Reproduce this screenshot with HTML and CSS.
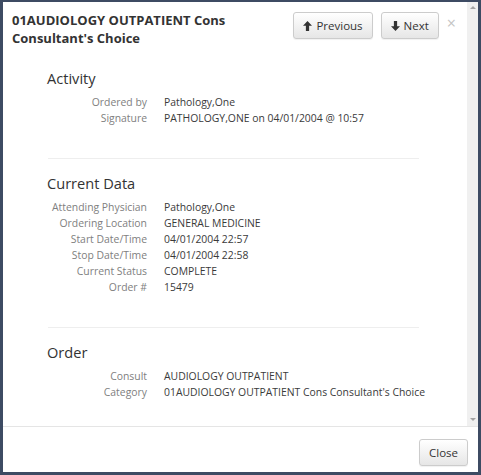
FILE: index.html
```html
<!DOCTYPE html>
<html>
<head>
<meta charset="utf-8">
<link rel="stylesheet" href="styles.css">
</head>
<body>
<div class="frame">
  <div class="scroller">
    <div class="content">
      <div class="header">
        <h4 class="title">01AUDIOLOGY OUTPATIENT Cons Consultant's Choice</h4>
        <div class="nav">
          <button class="btn"><svg class="ico" viewBox="0 0 10 11"><path d="M5 0 L10 5.2 L6.8 5.2 L6.8 11 L3.2 11 L3.2 5.2 L0 5.2 Z"/></svg>Previous</button>
          <button class="btn"><svg class="ico" viewBox="0 0 10 11"><path d="M5 11 L10 5.8 L6.8 5.8 L6.8 0 L3.2 0 L3.2 5.8 L0 5.8 Z"/></svg>Next</button>
          <span class="x">×</span>
        </div>
      </div>
      <div class="body">
        <section class="sec">
          <h3 class="sec-title">Activity</h3>
          <dl class="rows">
            <dt>Ordered by</dt><dd>Pathology,One</dd>
            <dt>Signature</dt><dd>PATHOLOGY,ONE on 04/01/2004 @ 10:57</dd>
          </dl>
        </section>
        <hr class="sep">
        <section class="sec">
          <h3 class="sec-title">Current Data</h3>
          <dl class="rows">
            <dt>Attending Physician</dt><dd>Pathology,One</dd>
            <dt>Ordering Location</dt><dd>GENERAL MEDICINE</dd>
            <dt>Start Date/Time</dt><dd>04/01/2004 22:57</dd>
            <dt>Stop Date/Time</dt><dd>04/01/2004 22:58</dd>
            <dt>Current Status</dt><dd>COMPLETE</dd>
            <dt>Order #</dt><dd>15479</dd>
          </dl>
        </section>
        <hr class="sep">
        <section class="sec">
          <h3 class="sec-title">Order</h3>
          <dl class="rows">
            <dt>Consult</dt><dd>AUDIOLOGY OUTPATIENT</dd>
            <dt>Category</dt><dd>01AUDIOLOGY OUTPATIENT Cons Consultant's Choice</dd>
          </dl>
        </section>
      </div>
    </div>
    <div class="scrollbar">
      <span class="arr up"></span>
      <span class="arr down"></span>
    </div>
  </div>
  <div class="footer">
    <button class="btn close">Close</button>
  </div>
</div>
</body>
</html>
```

FILE: styles.css
```css
* { box-sizing: border-box; }
html, body { margin: 0; padding: 0; }
body {
  background: #3d4b63;
  font-family: "Open Sans", "DejaVu Sans", sans-serif;
  color: #333;
}
.frame {
  width: 481px;
  height: 475px;
  border: 3px solid #3d4b63;
  border-top-width: 2px;
  background: #fff;
  display: flex;
  flex-direction: column;
}
.scroller {
  flex: 1;
  display: flex;
  min-height: 0;
}
.content {
  flex: 1;
  min-width: 0;
}
.header {
  display: flex;
  align-items: flex-start;
  padding: 9px 0 0 9px;
  height: 66px;
}
.title {
  margin: 0;
  font-size: 13px;
  line-height: 18px;
  font-weight: 700;
  color: #333;
  width: 240px;
}
.nav {
  margin-left: auto;
  display: flex;
  align-items: flex-start;
  padding-top: 1px;
}
.btn {
  font-family: "Open Sans", "DejaVu Sans", sans-serif;
  font-size: 11.5px;
  color: #333;
  height: 27px;
  padding: 0 9px;
  border: 1px solid #ccc;
  border-radius: 3px;
  background: linear-gradient(#ffffff, #e6e6e6);
  box-shadow: 0 1px 1px rgba(0,0,0,0.06);
  display: inline-flex;
  align-items: center;
  gap: 4px;
}
.nav .btn + .btn { margin-left: 8px; }
.ico { width: 9px; height: 10px; fill: #333; }
.x {
  font-size: 16px;
  line-height: 16px;
  color: #c4c4c4;
  margin: 3px 11px 0 8px;
}
.body {
  padding: 0 0 0 44px;
  width: 416px;
}
.sec-title {
  margin: 0;
  font-size: 14.6px;
  line-height: 20px;
  font-weight: 400;
  color: #333;
}
.rows {
  display: grid;
  grid-template-columns: 100px 1fr;
  column-gap: 17px;
  margin: 6px 0 32px 0;
  font-size: 10.4px;
  line-height: 16px;
}
.rows dt {
  text-align: right;
  color: #808080;
  white-space: nowrap;
}
.rows dd {
  margin: 0;
  color: #3a3a3a;
  white-space: nowrap;
}
.sep {
  margin: 0 0 14px 1px;
  border: 0;
  border-top: 1px solid #eee;
  height: 0;
}
.scrollbar {
  width: 11px;
  background: #f0f0f0;
  display: flex;
  flex-direction: column;
  justify-content: space-between;
  align-items: center;
  padding: 4px 0 5px;
}
.arr {
  width: 0;
  height: 0;
  border-left: 3px solid transparent;
  border-right: 3px solid transparent;
}
.arr.up { border-bottom: 3px solid #a3a3a3; }
.arr.down { border-top: 3px solid #a3a3a3; }
.footer {
  height: 46px;
  border-top: 1px solid #e5e5e5;
  display: flex;
  justify-content: flex-end;
  align-items: flex-start;
  padding: 12px 10px 0 0;
}
.btn.close {
  padding: 0 9px;
}
```
